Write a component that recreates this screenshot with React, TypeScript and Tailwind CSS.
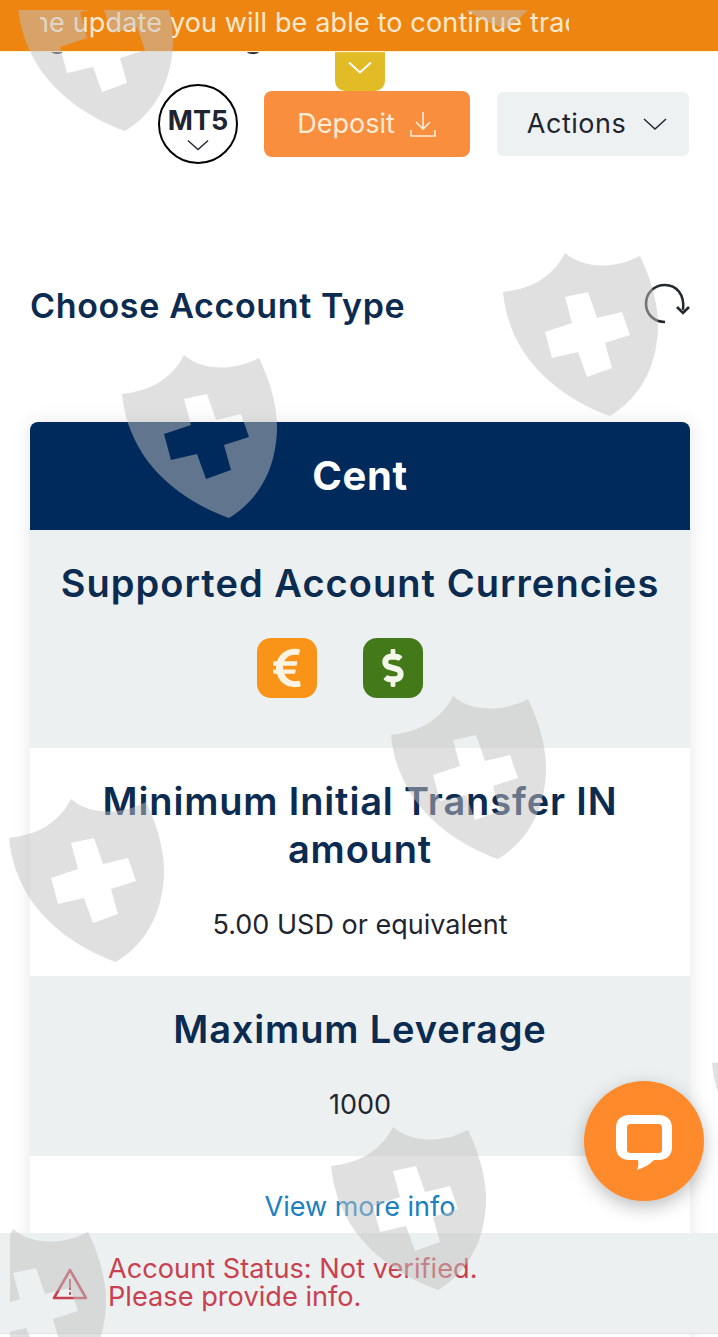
import { FaEuroSign, FaDollarSign } from "react-icons/fa";

const shields = [
  "left-[18px] top-[-32px] [clip-path:inset(42px_0_0_0)]",
  "left-[398px] top-[-134px] [clip-path:inset(144px_0_0_0)]",
  "left-[503px] top-[253px]",
  "left-[122px] top-[355px]",
  "left-[391px] top-[696px]",
  "left-[9px] top-[799px]",
  "left-[331px] top-[1127px]",
  "left-[-49px] top-[1229px] [clip-path:inset(0_0_0_59px)]",
  "left-[712px] top-[1024px]",
];

function Shield({ className }: { className: string }) {
  return (
    <svg
      className={`absolute w-[156px] h-[164px] pointer-events-none ${className}`}
      viewBox="0 0 156 164"
    >
      <path
        fillRule="evenodd"
        fill="#c2c2c2"
        fillOpacity="0.5"
        d="M62 0C78 14 108 18 137 3C150 30 158 60 154 87C150 122 132 148 107 163C70 150 38 126 20 98C8 78 2 60 0 39C28 36 50 24 62 0ZM62 44L69 70L42 79L49 105L75 99L84 124L109 115L102 90L127 82L119 59L94 65L85 39Z"
      />
    </svg>
  );
}

function Chevron({ className, stroke = "currentColor", width = 1.4 }: { className: string; stroke?: string; width?: number }) {
  return (
    <svg className={className} viewBox="0 0 24 12" fill="none" stroke={stroke} strokeWidth={width}>
      <path d="M1 1L12 11L23 1" />
    </svg>
  );
}

export default function App() {
  return (
    <div className="relative h-[1337px] w-[718px] overflow-hidden bg-white font-['Inter',sans-serif] text-[#1f2530]">
      {/* page content */}
      <div className="flex h-[54px] items-end gap-[180px] pl-[50px]">
        <span className="h-[6px] w-[14px] rounded-b-full bg-[#222]" />
        <span className="h-[8px] w-[18px] rounded-b-full bg-[#222]" />
      </div>

      <div className="mt-[-3px] flex justify-center pl-[2px]">
        <div className="flex h-[40px] w-[50px] items-center justify-center rounded-b-[10px] bg-[#e2bc27]">
          <Chevron className="mt-[-8px] h-[13px] w-[24px]" stroke="#fff" width={2} />
        </div>
      </div>

      <div className="mt-[-7px] flex items-start pl-[158px]">
        <div className="flex h-[80px] w-[80px] flex-col items-center rounded-full border-2 border-black bg-white pt-[20px]">
          <span className="text-[27px] font-bold leading-[30px]">MT5</span>
          <Chevron className="mt-[3px] h-[12px] w-[22px]" />
        </div>
        <div className="ml-[26px] mt-[7px] flex h-[66px] w-[206px] items-center justify-center gap-[14px] rounded-lg bg-[#f98f3e] text-[27px] text-[#fdecd8]">
          Deposit
          <svg className="h-[28px] w-[28px]" viewBox="0 0 28 28" fill="none" stroke="#fdecd8" strokeWidth="1.6">
            <path d="M14 2V18M7 12L14 19L21 12M2 20V26H26V20" />
          </svg>
        </div>
        <div className="ml-[27px] mt-[8px] flex h-[64px] w-[192px] items-center justify-center gap-[17px] rounded-md bg-[#eef1f2] pl-[8px] text-[27px] tracking-[0.5px]">
          Actions
          <Chevron className="h-[12px] w-[24px]" />
        </div>
      </div>

      <div className="mt-[120px] flex items-center justify-between pl-[30px] pr-[28px]">
        <h1 className="text-[34px] font-semibold leading-[44px] tracking-[0.65px] text-[#0c2b50]">Choose Account Type</h1>
        <svg className="mt-[-4px] h-[42px] w-[46px]" viewBox="0 0 46 42" fill="none" stroke="#23272e" strokeWidth="2.6">
          <path d="M21 39C10 39 2 31 2 21C2 10 10 2 21 2C32 2 41 11 39 27" />
          <path d="M33 24L39 30L45 24" />
        </svg>
      </div>

      <div className="mx-[30px] mt-[94px] w-[660px] shadow-[0_0_18px_rgba(0,0,0,0.1)]">
        <div className="flex h-[108px] items-center justify-center rounded-t-lg bg-[#002a5b] text-[40px] font-bold tracking-[0.6px] text-white">
          Cent
        </div>
        <div className="h-[218px] bg-[#ecf0f1] pt-[29px] text-center">
          <h2 className="text-[38px] font-semibold leading-[48px] tracking-[1.05px] text-[#0c2b50]">
            Supported Account Currencies
          </h2>
          <div className="mt-[31px] flex justify-center gap-[46px] pr-[40px]">
            <div className="flex h-[60px] w-[60px] items-center justify-center rounded-[14px] bg-[#fa9419] text-[44px] text-[#fdf3e3]">
              <FaEuroSign />
            </div>
            <div className="flex h-[60px] w-[60px] items-center justify-center rounded-[14px] bg-[#44791a] text-[38px] text-[#f3f7ea]">
              <FaDollarSign />
            </div>
          </div>
        </div>
        <div className="h-[228px] bg-white pt-[29px] text-center">
          <h2 className="px-[40px] text-[38px] font-semibold leading-[48px] tracking-[0.85px] text-[#0c2b50]">
            Minimum Initial Transfer IN amount
          </h2>
          <p className="mt-[32px] text-[27px] leading-[40px]">5.00 USD or equivalent</p>
        </div>
        <div className="h-[180px] bg-[#ecf0f1] pt-[29px] text-center">
          <h2 className="text-[38px] font-semibold leading-[48px] tracking-[0.85px] text-[#0c2b50]">Maximum Leverage</h2>
          <p className="mt-[32px] text-[27px] leading-[40px]">1000</p>
        </div>
        <div className="h-[200px] bg-white pt-[31px] text-center text-[27px] leading-[40px] text-[#1a80c0]">
          View more info
        </div>
      </div>

      {/* fixed bars */}
      <div className="absolute left-0 right-0 top-0 flex h-[51px] items-center bg-[#ee8511] pb-[6px] pl-[40px] shadow-[0_1px_1px_#fff3d0]">
        <div className="w-[529px] overflow-hidden whitespace-nowrap text-[27px] leading-[44px] tracking-[0.15px] text-[#fde9cf]">
          <span className="ml-[-16px] inline-block">the update you will be able to continue trading</span>
        </div>
      </div>

      <div className="absolute bottom-[3px] left-0 right-0 flex h-[101px] items-center border-b border-[#dfe3e5] bg-[#ecf0f1] pl-[52px]">
        <svg className="h-[33px] w-[36px]" viewBox="0 0 36 33" fill="none" stroke="#c9414f" strokeWidth="2.6">
          <path d="M18 3L34 31H2Z" strokeLinejoin="round" />
          <path d="M18 12V23M18 25V28" strokeWidth="1.8" />
        </svg>
        <p className="ml-[20px] text-[27.2px] leading-[28px] text-[#c9414f]">
          Account Status: Not verified.
          <br />
          Please provide info.
        </p>
      </div>

      {/* watermark */}
      {shields.map((s) => (
        <Shield key={s} className={s} />
      ))}

      {/* chat button */}
      <div className="absolute left-[584px] top-[1081px] flex h-[120px] w-[120px] items-center justify-center rounded-full bg-[#ff8a2b] shadow-[0_6px_18px_rgba(0,0,0,0.25)]">
        <svg className="mt-[3px] h-[55px] w-[56px]" viewBox="0 0 56 55" fill="#fff">
          <path
            fillRule="evenodd"
            d="M13 0H43C51 0 56 5 56 13V32C56 40 51 45 43 45H38C33 50 27 53 21 55C22 52 23 49 22 45H13C5 45 0 40 0 32V13C0 5 5 0 13 0ZM15 9C12 9 11 10 11 13V34C11 37 12 38 15 38H42C45 38 46 37 46 34V13C46 10 45 9 42 9Z"
          />
        </svg>
      </div>
    </div>
  );
}
